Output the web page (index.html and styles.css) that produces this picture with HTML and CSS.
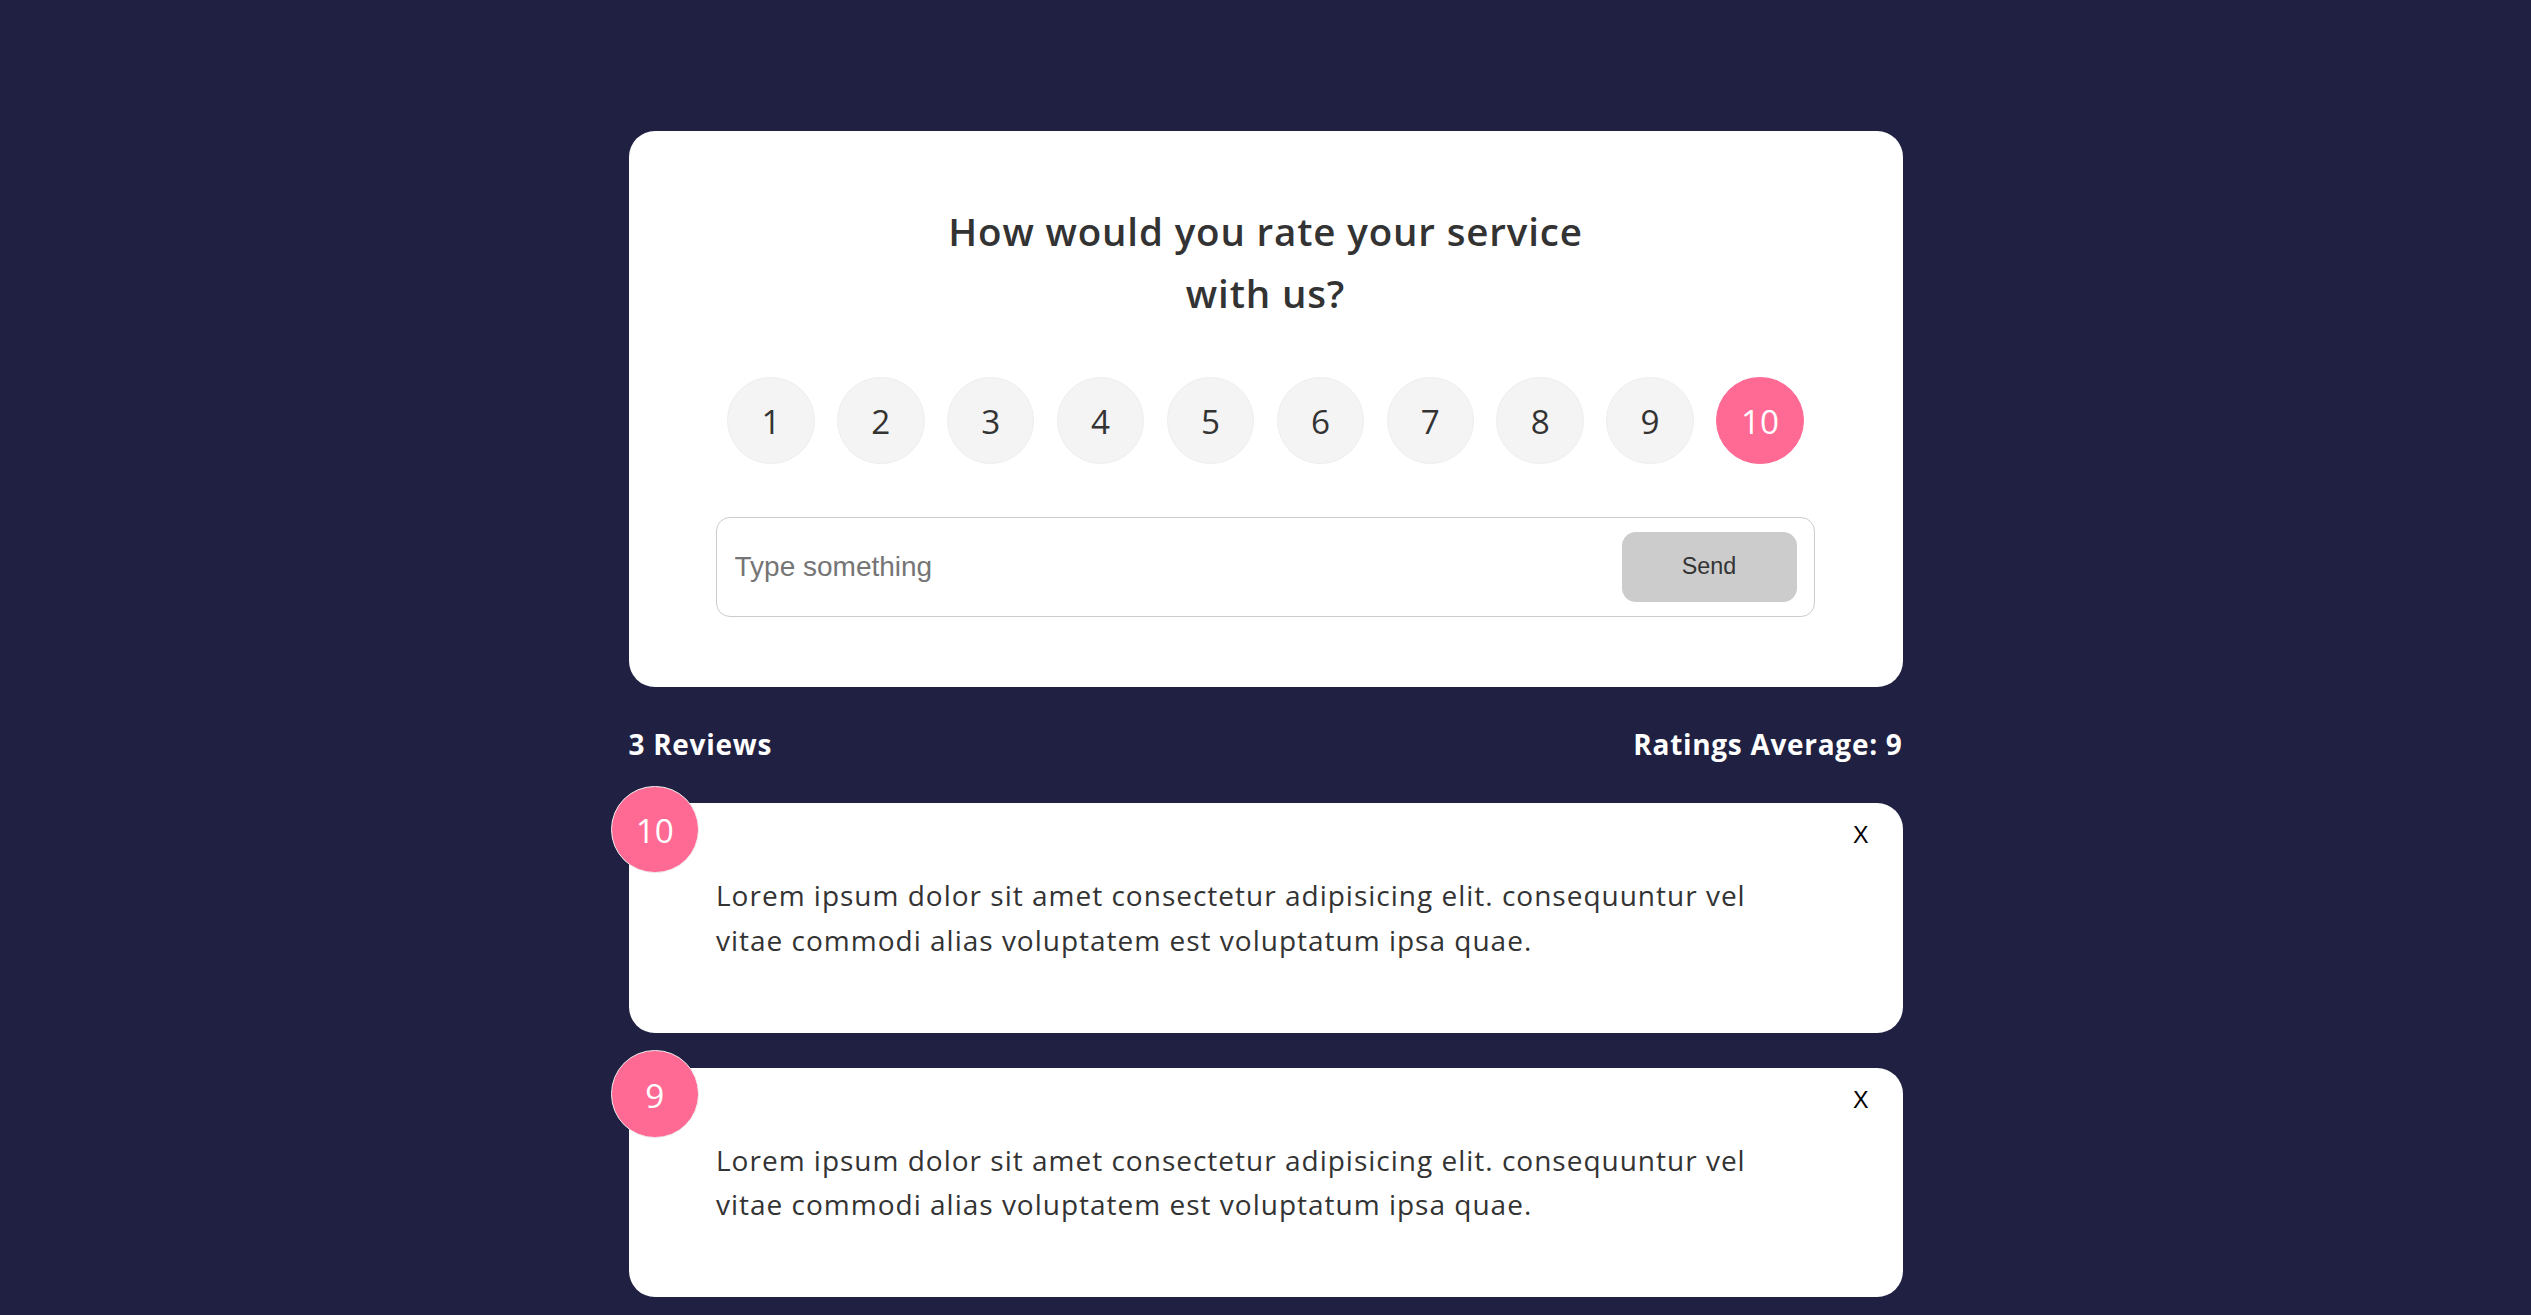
FILE: index.html
```html
<!DOCTYPE html>
<html lang="en">
<head>
<meta charset="UTF-8">
<title>Feedback UI</title>
<link rel="stylesheet" href="styles.css">
</head>
<body>
<div class="container">
  <div class="card">
    <form class="feedback-form">
      <h2>How would you rate your service<br>with us?</h2>
      <ul class="rating">
        <li><label>1</label></li>
        <li><label>2</label></li>
        <li><label>3</label></li>
        <li><label>4</label></li>
        <li><label>5</label></li>
        <li><label>6</label></li>
        <li><label>7</label></li>
        <li><label>8</label></li>
        <li><label>9</label></li>
        <li class="selected"><label>10</label></li>
      </ul>
      <div class="input-group">
        <input type="text" placeholder="Type something">
        <button type="submit" class="btn" disabled>Send</button>
      </div>
    </form>
  </div>

  <div class="feedback-stats">
    <h4>3 Reviews</h4>
    <h4>Ratings Average: 9</h4>
  </div>

  <div class="feedback-list">
    <div class="card review">
      <div class="num-display">10</div>
      <button class="close">X</button>
      <div class="text-display">Lorem ipsum dolor sit amet consectetur adipisicing elit. consequuntur vel vitae commodi alias voluptatem est voluptatum ipsa quae.</div>
    </div>
    <div class="card review">
      <div class="num-display">9</div>
      <button class="close">X</button>
      <div class="text-display">Lorem ipsum dolor sit amet consectetur adipisicing elit. consequuntur vel vitae commodi alias voluptatem est voluptatum ipsa quae.</div>
    </div>
    <div class="card review">
      <div class="num-display">8</div>
      <button class="close">X</button>
      <div class="text-display">Lorem ipsum dolor sit amet consectetur adipisicing elit. consequuntur vel vitae commodi alias voluptatem est voluptatum ipsa quae.</div>
    </div>
  </div>
</div>
</body>
</html>
```
FILE: styles.css
```css
* {
  box-sizing: border-box;
  margin: 0;
  padding: 0;
}

body {
  font-family: "Open Sans", "Noto Sans", sans-serif;
  background-color: #202142;
  color: #fff;
  line-height: 1.6;
  font-size: 28px;
}

.container {
  max-width: 1344px;
  margin: 0 auto;
  padding: 96px 35px 0;
}

.card {
  background-color: #fff;
  color: #333;
  border-radius: 26px;
  padding: 70px 87.5px;
  margin: 35px 0;
  position: relative;
}

.card h2 {
  font-size: 38.5px;
  font-weight: 600;
  text-align: center;
  line-height: 1.6;
  letter-spacing: 0.85px;
}

.rating {
  display: flex;
  align-items: center;
  justify-content: space-around;
  list-style: none;
  margin: 52.5px 0;
}

.rating li {
  background: #f4f4f4;
  width: 87.5px;
  height: 87.5px;
  padding: 17.5px 0;
  text-align: center;
  border-radius: 50%;
  font-size: 33.25px;
  line-height: 1.6;
  border: 1px solid #eee;
  color: #333;
}

.rating li.selected {
  background: #ff6a95;
  border-color: #ff6a95;
  color: #fff;
}

.input-group {
  display: flex;
  align-items: center;
  border: 1px solid #ccc;
  padding: 14px 17.5px;
  border-radius: 14px;
}

.input-group input {
  flex-grow: 2;
  border: none;
  outline: none;
  font-family: "Liberation Sans", Arial, sans-serif;
  font-size: 28px;
  padding: 0;
  color: #333;
  background: transparent;
}

.input-group input::placeholder {
  color: #757575;
}

.btn {
  border: 0;
  border-radius: 14px;
  width: 175px;
  height: 70px;
  font-family: "Liberation Sans", Arial, sans-serif;
  font-size: 23.3px;
  background-color: #cccccc;
  color: #333;
}

.feedback-stats {
  display: flex;
  justify-content: space-between;
  align-items: center;
  height: 46.4px;
}

.feedback-stats h4 {
  font-size: 28px;
  font-weight: 700;
  line-height: 1.6;
  letter-spacing: 0.7px;
}

.review {
  padding: 70px 87.5px;
}

.num-display {
  position: absolute;
  top: -17.5px;
  left: -17.5px;
  width: 87.5px;
  height: 87.5px;
  background: #ff6a95;
  border: 1px solid #eee;
  border-radius: 50%;
  padding: 17.5px 0;
  text-align: center;
  font-size: 33.25px;
  line-height: 1.6;
  color: #fff;
}

.close {
  position: absolute;
  top: 19px;
  right: 34px;
  background: none;
  border: none;
  padding: 0;
  font-family: "Liberation Sans", Arial, sans-serif;
  font-size: 23.3px;
  color: #000;
}

.text-display {
  font-size: 28px;
  line-height: 1.6;
  letter-spacing: 1px;
}
```
